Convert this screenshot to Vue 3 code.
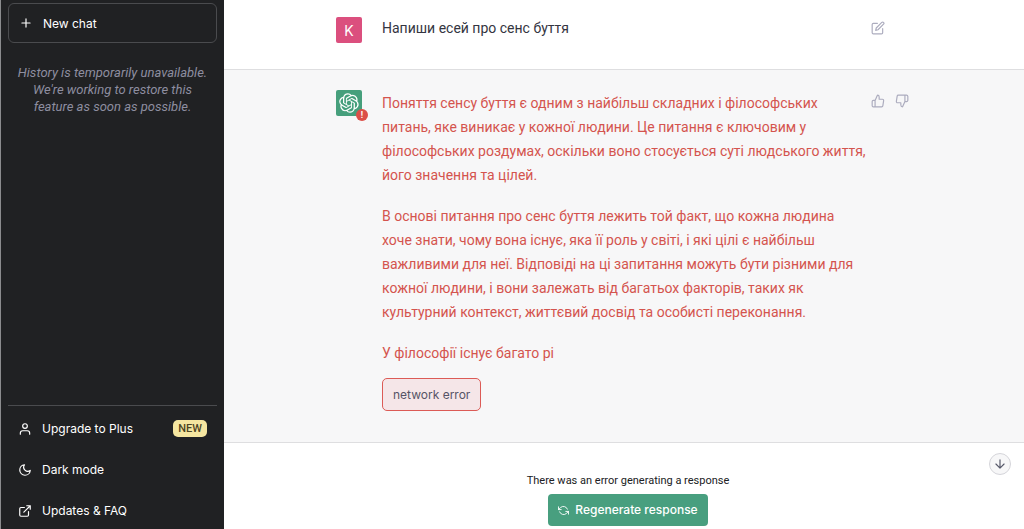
<script setup>
const paragraphs = [
  [
    'Поняття сенсу буття є одним з найбільш складних і філософських',
    'питань, яке виникає у кожної людини. Це питання є ключовим у',
    'філософських роздумах, оскільки воно стосується суті людського життя,',
    'його значення та цілей.',
  ],
  [
    'В основі питання про сенс буття лежить той факт, що кожна людина',
    'хоче знати, чому вона існує, яка її роль у світі, і які цілі є найбільш',
    'важливими для неї. Відповіді на ці запитання можуть бути різними для',
    'кожної людини, і вони залежать від багатьох факторів, таких як',
    'культурний контекст, життєвий досвід та особисті переконання.',
  ],
  ['У філософії існує багато рі'],
]
</script>

<template>
  <div class="app">
    <aside class="sidebar">
      <button class="new-chat" type="button">
        <svg class="icon" viewBox="0 0 24 24"><path d="M12 5v14M5 12h14" /></svg>
        New chat
      </button>
      <p class="history">
        History is temporarily unavailable.<br />We're working to restore this<br />feature as soon as possible.
      </p>
      <nav class="menu">
        <a href="#">
          <svg class="icon" viewBox="0 0 24 24"><path d="M20 21v-2a4 4 0 0 0-4-4H8a4 4 0 0 0-4 4v2" /><circle cx="12" cy="7" r="4" /></svg>
          Upgrade to Plus
          <span class="badge">NEW</span>
        </a>
        <a href="#">
          <svg class="icon" viewBox="0 0 24 24"><path d="M21 12.79A9 9 0 1 1 11.21 3 7 7 0 0 0 21 12.79z" /></svg>
          Dark mode
        </a>
        <a href="#">
          <svg class="icon" viewBox="0 0 24 24"><path d="M18 13v6a2 2 0 0 1-2 2H5a2 2 0 0 1-2-2V8a2 2 0 0 1 2-2h6M15 3h6v6M10 14 21 3" /></svg>
          Updates &amp; FAQ
        </a>
      </nav>
    </aside>

    <main class="main">
      <section class="row user">
        <div class="column">
          <div class="avatar pink">K</div>
          <div class="text">Напиши есей про сенс буття</div>
          <div class="actions">
            <button type="button" aria-label="Edit">
              <svg class="icon" viewBox="0 0 24 24"><path d="M11 4H4a2 2 0 0 0-2 2v14a2 2 0 0 0 2 2h14a2 2 0 0 0 2-2v-7" /><path d="M18.5 2.5a2.121 2.121 0 0 1 3 3L12 15l-4 1 1-4 9.500-9.500z" /></svg>
            </button>
          </div>
        </div>
      </section>

      <section class="row assistant">
        <div class="column">
          <div class="avatar green">
            <svg class="logo" viewBox="0 0 41 41"><path d="M37.532 16.87a9.963 9.963 0 0 0-.856-8.184 10.078 10.078 0 0 0-10.855-4.835A9.964 9.964 0 0 0 18.306.5a10.079 10.079 0 0 0-9.614 6.977 9.967 9.967 0 0 0-6.664 4.834 10.08 10.08 0 0 0 1.240 11.817 9.965 9.965 0 0 0 .856 8.185 10.079 10.079 0 0 0 10.855 4.835 9.965 9.965 0 0 0 7.516 3.350 10.078 10.078 0 0 0 9.617-6.981 9.967 9.967 0 0 0 6.663-4.834 10.079 10.079 0 0 0-1.243-11.813ZM22.498 37.886a7.474 7.474 0 0 1-4.799-1.735c.061-.033.168-.091.237-.134l7.964-4.600a1.294 1.294 0 0 0 .655-1.134V19.054l3.366 1.944a.12.12 0 0 1 .066.092v9.299a7.505 7.505 0 0 1-7.490 7.496ZM6.392 31.006a7.471 7.471 0 0 1-.894-5.023c.060.036.162.099.237.141l7.964 4.600a1.297 1.297 0 0 0 1.308 0l9.724-5.614v3.888a.12.12 0 0 1-.048.103l-8.051 4.649a7.504 7.504 0 0 1-10.240-2.744ZM4.297 13.620A7.469 7.469 0 0 1 8.200 10.333c0 .068-.004.190-.004.274v9.201a1.294 1.294 0 0 0 .654 1.132l9.723 5.614-3.366 1.944a.12.12 0 0 1-.114.010L7.040 23.856a7.504 7.504 0 0 1-2.743-10.237Zm27.658 6.437-9.724-5.615 3.367-1.943a.121.121 0 0 1 .113-.010l8.052 4.648a7.498 7.498 0 0 1-1.158 13.528v-9.476a1.293 1.293 0 0 0-.650-1.132Zm3.350-5.043c-.059-.037-.162-.099-.236-.141l-7.965-4.600a1.298 1.298 0 0 0-1.308 0l-9.723 5.614v-3.888a.12.12 0 0 1 .048-.103l8.050-4.645a7.497 7.497 0 0 1 11.135 7.763Zm-21.063 6.929-3.367-1.944a.12.12 0 0 1-.065-.092v-9.299a7.497 7.497 0 0 1 12.293-5.756 6.940 6.940 0 0 0-.236.134l-7.965 4.600a1.294 1.294 0 0 0-.654 1.132l-.006 11.225Zm1.829-3.943 4.330-2.501 4.332 2.500v5l-4.331 2.500-4.331-2.500V18Z" /></svg>
            <span class="alert">!</span>
          </div>
          <div class="text error">
            <p v-for="(lines, i) in paragraphs" :key="i">
              <template v-for="(line, j) in lines" :key="j"><br v-if="j" />{{ line }}</template>
            </p>
            <div class="notice">network error</div>
          </div>
          <div class="actions">
            <button type="button" aria-label="Good response">
              <svg class="icon" viewBox="0 0 24 24"><path d="M14 9V5a3 3 0 0 0-3-3l-4 9v11h11.280a2 2 0 0 0 2-1.700l1.380-9a2 2 0 0 0-2-2.300zM7 22H4a2 2 0 0 1-2-2v-7a2 2 0 0 1 2-2h3" /></svg>
            </button>
            <button type="button" aria-label="Bad response">
              <svg class="icon" viewBox="0 0 24 24"><path d="M10 15v4a3 3 0 0 0 3 3l4-9V2H5.720a2 2 0 0 0-2 1.700l-1.380 9a2 2 0 0 0 2 2.300zM17 2h2.670A2.310 2.310 0 0 1 22 4v7a2.310 2.310 0 0 1-2.330 2H17" /></svg>
            </button>
          </div>
        </div>
      </section>

      <footer class="footer">
        <p>There was an error generating a response</p>
        <button class="regenerate" type="button">
          <svg class="icon" viewBox="0 0 24 24"><path d="M1 4v6h6M23 20v-6h-6" /><path d="M20.490 9A9 9 0 0 0 5.640 5.640L1 10m22 4-4.640 4.360A9 9 0 0 1 3.510 15" /></svg>
          Regenerate response
        </button>
        <button class="scroll" type="button" aria-label="Scroll to bottom">
          <svg class="icon" viewBox="0 0 24 24"><path d="M12 5v14M19 12l-7 7-7-7" /></svg>
        </button>
      </footer>
    </main>
  </div>
</template>

<style>
body {
  margin: 0;
  background: #fff;
}
</style>

<style scoped>
.app {
  display: flex;
  height: 100vh;
  overflow: hidden;
  font-family: Inter, "Liberation Sans", sans-serif;
  font-size: 12px;
}
p {
  margin: 0;
}
button {
  font: inherit;
  cursor: pointer;
}
.icon {
  width: 14px;
  height: 14px;
  flex: none;
  fill: none;
  stroke: currentColor;
  stroke-width: 2;
  stroke-linecap: round;
  stroke-linejoin: round;
}
.sidebar {
  display: flex;
  flex-direction: column;
  box-sizing: border-box;
  width: 224px;
  flex: none;
  padding: 3px 7px 0;
  border-left: 1px solid #8b8c8e;
  background: #202123;
  color: #fff;
}
.new-chat {
  display: flex;
  align-items: center;
  gap: 10px;
  height: 40px;
  padding: 0 10px;
  border: 1px solid #4a4b4e;
  border-radius: 6px;
  background: none;
  color: inherit;
}
.history {
  margin-top: 21px;
  font-family: Roboto, "Liberation Sans", sans-serif;
  font-size: 13px;
  line-height: 17px;
  text-align: center;
  font-style: italic;
  color: #8e8ea0;
}
.menu {
  margin-top: auto;
  margin-bottom: -2px;
  border-top: 1px solid #4a4b4e;
  padding-top: 2px;
}
.menu a {
  display: flex;
  align-items: center;
  gap: 10px;
  height: 41px;
  padding: 0 10px;
  color: inherit;
  text-decoration: none;
}
.badge {
  margin-left: auto;
  padding: 0 5px;
  border-radius: 5px;
  background: #f5e6a0;
  color: #4d4422;
  font-family: Roboto, "Liberation Sans", sans-serif;
  font-size: 11px;
  font-weight: 500;
  line-height: 17px;
}
.main {
  flex: 1;
  display: flex;
  flex-direction: column;
  min-width: 0;
}
.row {
  border-bottom: 1px solid #dedee0;
}
.column {
  display: flex;
  max-width: 576px;
  margin: 0 auto;
}
.user {
  padding: 16px 0 26px;
}
.assistant {
  padding: 20px 0 31px;
  background: #f7f7f8;
}
.avatar {
  position: relative;
  display: flex;
  align-items: center;
  justify-content: center;
  width: 26px;
  height: 26px;
  flex: none;
  border-radius: 2px;
  color: #fff;
  font-size: 14px;
}
.pink {
  margin-top: 1px;
  background: #db4f7e;
}
.green {
  background: #469f7c;
}
.logo {
  width: 20px;
  height: 20px;
  fill: currentColor;
}
.alert {
  position: absolute;
  right: -6px;
  bottom: -5px;
  width: 12px;
  height: 12px;
  border-radius: 50%;
  background: #dc4f48;
  font-size: 9px;
  font-weight: 600;
  line-height: 12px;
  text-align: center;
}
.text {
  flex: 1;
  min-width: 0;
  margin-left: 20px;
  font-family: Roboto, "Liberation Sans", sans-serif;
  font-size: 14px;
  line-height: 24px;
  white-space: nowrap;
  color: #343541;
}
.error {
  padding-top: 1px;
  color: #d4544e;
}
.error p + p {
  margin-top: 17px;
}
.notice {
  width: fit-content;
  margin-top: 13px;
  padding: 4px 10px;
  border: 1px solid #dc5b56;
  border-radius: 5px;
  background: #f5e6e8;
  color: #565466;
  font-family: Inter, "Liberation Sans", sans-serif;
  font-size: 12px;
  line-height: 23px;
}
.actions {
  display: flex;
  gap: 10px;
  width: 41px;
  height: 24px;
  align-items: center;
}
.assistant .actions {
  height: 22px;
}
.actions button {
  display: flex;
  padding: 0;
  border: 0;
  background: none;
  color: #acacbe;
}
.footer {
  position: relative;
  display: flex;
  flex-direction: column;
  align-items: center;
  padding: 30px 0 0 8px;
  font-family: Roboto, "Liberation Sans", sans-serif;
  font-size: 11px;
  line-height: 16px;
  color: #202123;
}
.regenerate {
  display: flex;
  align-items: center;
  gap: 6px;
  height: 32px;
  margin-top: 5px;
  padding: 0 10px;
  border: 0;
  border-radius: 4px;
  background: #489f7f;
  color: #fff;
  font-family: Inter, "Liberation Sans", sans-serif;
  font-size: 12px;
  font-weight: 500;
}
.regenerate .icon {
  width: 11px;
  height: 11px;
}
.scroll {
  position: absolute;
  top: 10px;
  right: 13px;
  display: flex;
  align-items: center;
  justify-content: center;
  width: 22px;
  height: 22px;
  padding: 0;
  border: 1px solid #d5d5da;
  border-radius: 50%;
  background: #f7f7f8;
  color: #565869;
}
</style>
